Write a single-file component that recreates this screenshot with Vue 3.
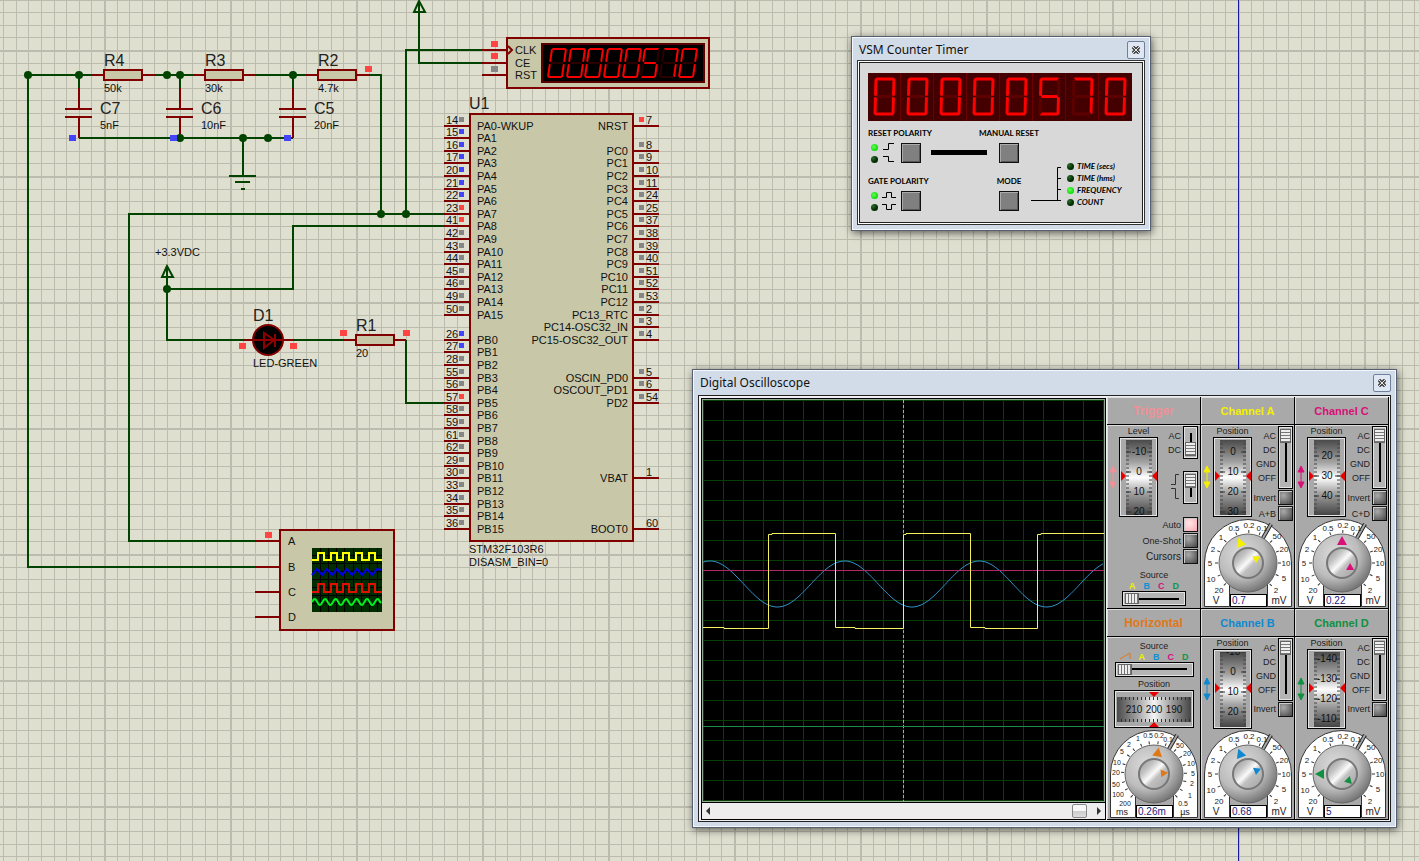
<template>
  <div class="workspace">
    <svg class="sheet" width="100%" height="100%">
      <defs>
        <pattern id="grid" x="104" y="50" width="126" height="126" patternUnits="userSpaceOnUse">
          <rect width="126" height="126" fill="#dfdfd0" />
          <g fill="#bcbcae">
            <rect v-for="n in 9" :key="'v' + n" :x="Math.round(n * 12.6)" y="0" width="1" height="126" />
            <rect v-for="n in 9" :key="'h' + n" x="0" :y="Math.round(n * 12.6)" width="126" height="1" />
            <rect width="2" height="126" />
            <rect width="126" height="2" />
          </g>
        </pattern>
      </defs>
      <rect width="100%" height="100%" fill="url(#grid)" />
      <rect class="sheet-edge" x="1238" y="0" width="1" height="100%" />

      <!-- wires -->
      <path
        class="wire"
        d="M28 75H91M155 75H193M255 75H306M369 75H381V214M28 75V567H255M79 75V88M180 75V88M293 75V88M79 138H293M243 138V176
           M444 214H129V541H255M444 226H293V289H167M167 266V340H243M293 340H343M406 340V403H444M406 214V50H482M419 2V63H482"
      />
      <path class="wire" d="M229 176H256M235 182H250M241 189H245" />
      <path class="wire" fill="none" d="M167 266L162 277H173ZM419 1L414 12H425Z" />

      <!-- component leads -->
      <path
        class="lead"
        d="M91 75H155M193 75H255M306 75H369M343 340H406M243 340H293M482 50H507M482 63H507M482 75H507
           M255 541H280M255 567H280M255 592H280M255 617H280"
      />
      <g v-for="x in [79, 180, 293]" :key="x">
        <path class="lead" :d="`M${x} 88V109M${x} 117V138M${x - 14} 109H${x + 13}M${x - 14} 117H${x + 13}`" />
      </g>
      <rect v-for="r in resistors" :key="r.x" class="body" :x="r.x" :y="r.y" width="38" height="10" />
      <circle v-for="(n, i) in nodes" :key="i" class="node" :cx="n[0]" :cy="n[1]" r="4" />

      <!-- led -->
      <circle class="led" cx="268" cy="340" r="15" />
      <path class="led-mark" d="M253 340H283M264 333V348L274 340ZM275 334V347" />

      <rect v-for="(p, i) in probes" :key="i" :x="p[0] - 3" :y="p[1] - 3" width="7" height="6" :fill="levels[p[2]]" />

      <!-- counter part -->
      <rect class="body" x="507" y="38" width="202" height="50" />
      <path class="lead" fill="none" d="M508 46L512 50L508 54" />
      <rect x="542" y="44" width="162" height="38" fill="#000" stroke="#5a0000" stroke-width="2" />
      <g v-for="(c, i) in digits" :key="i" :transform="`translate(${548 + i * 19 - Math.round(i / 3)} 49)`">
        <path
          v-for="(d, s) in smallSegs"
          :key="s"
          class="segment"
          :d="d"
          stroke-width="2"
          :stroke="lit[c].includes(s) ? '#f80000' : '#2c0000'"
        />
      </g>

      <!-- microcontroller -->
      <rect class="body" x="470" y="114" width="163" height="427" />
      <g v-for="p in leftPins" :key="p.num">
        <path class="lead" :d="`M444 ${p.y}H469`" />
        <text class="small" x="446" :y="p.y - 2">{{ p.num }}</text>
        <rect x="459" :y="p.y - 9" width="5" height="5" :fill="levels[p.level]" />
        <text class="small" x="477" :y="p.y + 4">{{ p.name }}</text>
      </g>
      <g v-for="p in rightPins" :key="p.num">
        <path class="lead" :d="`M634 ${p.y}H659`" />
        <text class="small" x="646" :y="p.y - 2">{{ p.num }}</text>
        <rect v-if="p.level" x="639" :y="p.y - 9" width="5" height="5" :fill="levels[p.level]" />
        <text class="small" x="628" :y="p.y + 4" text-anchor="end">{{ p.name }}</text>
      </g>

      <!-- oscilloscope part -->
      <rect class="body" x="280" y="530" width="114" height="100" />
      <rect x="312" y="548" width="70" height="64" fill="#002c00" />
      <path
        stroke="#000"
        d="M312 555.5H382M312 563.5H382M312 571.5H382M312 579.5H382M312 587.5H382M312 595.5H382M312 603.5H382
           M320.5 548V612M328.5 548V612M336.5 548V612M344.5 548V612M353.5 548V612M361.5 548V612M369.5 548V612M377.5 548V612"
      />
      <path class="mini" stroke="#ffff00" :d="miniSquare(560, 553)" />
      <path class="mini" stroke="#0000e8" :d="miniZigzag" />
      <path class="mini" stroke="#e01000" :d="miniSquare(592, 584)" />
      <path class="mini" stroke="#00f020" :d="miniSine" />

      <text v-for="(t, i) in bigLabels" :key="i" class="big" :x="t[0]" :y="t[1]">{{ t[2] }}</text>
      <text v-for="(t, i) in smallLabels" :key="i" class="small" :x="t[0]" :y="t[1]">{{ t[2] }}</text>
    </svg>

    <!-- counter timer window -->
    <section class="window counter">
      <header class="titlebar">
        <h2>VSM Counter Timer</h2>
        <button class="close" aria-label="Close">
          <svg width="8" height="8" viewBox="0 0 9 9"><path d="M1 1L8 8M8 1L1 8" stroke="#444" stroke-width="4" /><path d="M1 1L8 8M8 1L1 8" stroke="#fff" /></svg>
        </button>
      </header>
      <div class="counter-panel">
        <svg class="readout" width="264" height="48" role="img" aria-label="00000570">
          <rect width="264" height="48" fill="#440000" />
          <g v-for="(c, i) in digits" :key="i" :transform="`translate(${i * 33} 0)`">
            <rect v-if="i" x="-1" width="1" height="48" fill="#6a0000" />
            <g transform="translate(7 6)">
              <path
                v-for="(d, s) in largeSegs"
                :key="s"
                class="segment"
                :d="d"
                stroke-width="3"
                :stroke="lit[c].includes(s) ? '#ff0000' : '#5c0000'"
              />
            </g>
          </g>
        </svg>
        <div class="controls">
          <div class="polarity">
            <label for="reset-polarity">RESET POLARITY</label>
            <div class="polarity-row">
              <div class="leds"><i class="lamp on"></i><i class="lamp"></i></div>
              <svg width="14" height="20"><path class="edge" d="M1 6.5H6.5V0.5H12M1 13.5H6.5V18.5H12" /></svg>
              <button id="reset-polarity" class="key"></button>
            </div>
          </div>
          <div class="bar"></div>
          <div class="single">
            <label for="manual-reset">MANUAL RESET</label>
            <button id="manual-reset" class="key"></button>
          </div>
          <div class="polarity">
            <label for="gate-polarity">GATE POLARITY</label>
            <div class="polarity-row">
              <div class="leds"><i class="lamp on"></i><i class="lamp"></i></div>
              <svg width="14" height="20"><path class="edge" d="M0 6.5H4.5V1.5H9.5V6.5H14M0 13.5H4.5V18.5H9.5V13.5H14" /></svg>
              <button id="gate-polarity" class="key"></button>
            </div>
          </div>
          <div></div>
          <div class="single">
            <label for="mode">MODE</label>
            <button id="mode" class="key"></button>
          </div>
          <div class="modes">
            <svg width="30" height="48"><path class="edge" d="M0 40.5H30M30 7.5H26.5V41M26 18.5H30M26 29.5H30" /></svg>
            <ul>
              <li v-for="m in modes" :key="m"><i class="lamp" :class="{ on: m === 'FREQUENCY' }"></i>{{ m }}</li>
            </ul>
          </div>
        </div>
      </div>
    </section>

    <!-- oscilloscope window -->
    <section class="window scope">
      <header class="titlebar">
        <h2>Digital Oscilloscope</h2>
        <button class="close" aria-label="Close">
          <svg width="8" height="8" viewBox="0 0 9 9"><path d="M1 1L8 8M8 1L1 8" stroke="#444" stroke-width="4" /><path d="M1 1L8 8M8 1L1 8" stroke="#fff" /></svg>
        </button>
      </header>
      <div class="scope-body">
        <div class="display">
          <svg class="screen" width="401" height="401">
            <rect width="401" height="401" fill="#000" />
            <g stroke="#073f07">
              <path v-for="n in 19" :key="n" :d="`M${n * 20 + 0.5} 0V401M0 ${n * 20 + 0.5}H401`" />
              <path fill="none" d="M0.5 0.5H400.5V400.5H0.5Z" />
            </g>
            <path stroke="#a0b0a0" stroke-dasharray="3 2" d="M200.5 0V401" />
            <path stroke="#1d8a4a" d="M0 326.5H401" />
            <path fill="none" stroke="#3090c8" :d="sineTrace" />
            <path stroke="#b02868" d="M0 170.5H401" />
            <path fill="none" stroke="#f4f060" d="M0 227.5H21V228.5H65.5V134.5H69V133.5H132.5V227.5H152V228.5H200.5V134.5H203V133.5H267.5V227.5H282V228.5H334.5V134.5H338V133.5H401" />
          </svg>
          <div class="scroller">
            <button aria-label="Scroll left"><svg width="6" height="8"><path d="M5 0V8L1 4Z" fill="#333" /></svg></button>
            <input type="range" aria-label="Time position" min="0" max="100" value="100" />
            <button aria-label="Scroll right"><svg width="6" height="8"><path d="M1 0V8L5 4Z" fill="#333" /></svg></button>
          </div>
        </div>

        <div class="panels">
          <article v-for="p in panels" :key="p.title" class="panel">
            <h3 :class="{ wide: p.kind !== 'channel' }" :style="{ color: p.color }">{{ p.title }}</h3>

            <div v-if="p.kind !== 'horizontal'" class="top-row" :class="p.kind">
              <div class="wheel-col">
                <span>{{ p.kind === 'trigger' ? 'Level' : 'Position' }}</span>
                <div class="wheel-row">
                  <svg width="8" height="24"><path :fill="p.color" :stroke="p.color" d="M4 2V22M4 1L1 7H7ZM4 23L1 17H7Z" /></svg>
                  <svg class="wheel" width="39" height="80">
                    <rect x="6" y="2" width="26" height="75" fill="url(#drum-v)" />
                    <path v-for="n in 18" :key="n" stroke="#444" :d="`M6 ${tickY(p, n)}H9M29 ${tickY(p, n)}H32`" />
                    <svg x="6" y="2" width="26" height="75">
                      <g v-for="s in p.scale" :key="s.text">
                        <path stroke="#333" :d="`M0 ${s.y - 3}H5M21 ${s.y - 3}H26`" />
                        <text class="drum-text" x="13" :y="s.y">{{ s.text }}</text>
                      </g>
                    </svg>
                    <path fill="#e80000" d="M1 33V43L6 38ZM37 33V43L32 38Z" />
                  </svg>
                </div>
              </div>
              <div v-if="p.kind === 'channel'" class="switch-col">
                <div class="switch">
                  <ul><li>AC</li><li>DC</li><li>GND</li><li>OFF</li></ul>
                  <input class="slide-v" type="range" :aria-label="p.title + ' coupling'" min="0" max="3" value="0" />
                </div>
                <label class="check">Invert<input type="checkbox" /></label>
                <label v-if="p.sum" class="check">{{ p.sum }}<input type="checkbox" /></label>
              </div>
              <div v-else class="switch-col">
                <div class="switch">
                  <ul><li>AC</li><li>DC</li></ul>
                  <input class="slide-v short" type="range" aria-label="Trigger coupling" min="0" max="1" value="1" />
                </div>
                <div class="switch slope">
                  <svg width="9" height="30"><path fill="none" stroke="#333" d="M0 13.5H4.5V3.5H8M0 17.5H4.5V27.5H8" /></svg>
                  <input class="slide-v short" type="range" aria-label="Trigger slope" min="0" max="1" value="0" />
                </div>
              </div>
            </div>

            <template v-if="p.kind === 'trigger'">
              <div class="trigger-checks">
                <label class="check">Auto<input type="checkbox" checked /></label>
                <label class="check">One-Shot<input type="checkbox" /></label>
                <label class="check larger">Cursors<input type="checkbox" /></label>
              </div>
              <div class="source">
                <span>Source</span>
                <div class="letters"><b v-for="l in letters" :key="l[0]" :style="{ color: l[1] }">{{ l[0] }}</b></div>
                <input class="slide-h" type="range" aria-label="Trigger source" min="0" max="3" value="0" />
              </div>
            </template>

            <div v-if="p.kind === 'horizontal'" class="source horizontal">
              <span>Source</span>
              <div class="letters">
                <svg width="11" height="8"><path fill="none" stroke="#e07818" d="M0 7L10 1V7" /></svg>
                <b v-for="l in letters" :key="l[0]" :style="{ color: l[1] }">{{ l[0] }}</b>
              </div>
              <input class="slide-h" type="range" aria-label="Horizontal source" min="0" max="4" value="0" />
              <span class="gap">Position</span>
              <svg class="wheel" width="80" height="38">
                <rect x="2" y="6" width="74" height="25" fill="url(#drum-h)" />
                <path v-for="n in 18" :key="n" stroke="#333" :d="`M${n * 4 + 2.5} 6V9M${n * 4 + 2.5} 28V31`" />
                <text class="drum-text" x="19" y="22">210</text>
                <text class="drum-text" x="39" y="22">200</text>
                <text class="drum-text" x="59" y="22">190</text>
                <path fill="#e80000" d="M34 1H44L39 6ZM34 36H44L39 31Z" />
              </svg>
            </div>

            <div v-if="p.knob" class="knob" :class="{ dense: p.kind === 'horizontal' }">
              <svg width="88" height="88">
                <path d="M0.5 87.5V44A43.5 43.5 0 0 1 87.5 44V87.5H63.5V60H25.5V87.5Z" fill="#fff" stroke="#333" />
                <path d="M59 19L67 5" stroke="#222" stroke-width="4" />
                <path d="M59 19L67 5" stroke="#a6a6a6" stroke-width="2" />
                <path v-for="(t, i) in p.knob.marks" :key="i" stroke="#333" d="M44 14V11" :transform="`rotate(${markAngle(t)} 44 44)`" />
                <text v-for="(t, i) in p.knob.marks" :key="'t' + i" class="mark" :x="t[0]" :y="t[1] + 3">{{ t[2] }}</text>
                <text class="unit" x="12" y="85">{{ p.knob.units[0] }}</text>
                <text class="unit" x="75" y="85">{{ p.knob.units[1] }}</text>
                <circle cx="44" cy="44" r="29" fill="url(#knob-outer)" stroke="#666" />
                <circle cx="44" cy="44" r="15" fill="url(#knob-inner)" stroke="#777" stroke-width="2" />
                <path :fill="p.color" d="M44 17L49 26H39Z" :transform="`rotate(${p.knob.outer} 44 44)`" />
                <path :fill="p.color" d="M44 30L48 37H40Z" :transform="`rotate(${p.knob.inner} 44 44)`" />
              </svg>
              <input type="text" :aria-label="p.title + ' scale'" :value="p.knob.value" />
            </div>
          </article>
        </div>
      </div>
    </section>

    <svg class="defs" width="0" height="0">
      <defs>
        <linearGradient id="drum-v" x1="0" y1="0" x2="0" y2="1">
          <stop offset="0" stop-color="#4a4a4a" /><stop offset="0.3" stop-color="#a4a4a4" /><stop offset="0.5" stop-color="#fff" />
          <stop offset="0.7" stop-color="#a4a4a4" /><stop offset="1" stop-color="#444" />
        </linearGradient>
        <linearGradient id="drum-h" x1="0" y1="0" x2="1" y2="0">
          <stop offset="0" stop-color="#4a4a4a" /><stop offset="0.25" stop-color="#999" /><stop offset="0.5" stop-color="#f4f4f4" />
          <stop offset="0.75" stop-color="#999" /><stop offset="1" stop-color="#444" />
        </linearGradient>
        <radialGradient id="knob-outer" cx="0.38" cy="0.35" r="0.68">
          <stop offset="0" stop-color="#dcdcdc" /><stop offset="0.6" stop-color="#bcbcbc" /><stop offset="1" stop-color="#747474" />
        </radialGradient>
        <linearGradient id="knob-inner" x1="0" y1="0" x2="1" y2="1">
          <stop offset="0.1" stop-color="#a0a0a0" /><stop offset="0.3" stop-color="#c4c4c4" /><stop offset="0.48" stop-color="#fafafa" />
          <stop offset="0.6" stop-color="#c0c0c0" /><stop offset="0.9" stop-color="#a8a8a8" />
        </linearGradient>
      </defs>
    </svg>
  </div>
</template>

<script setup>
const levels = { r: '#ff4444', b: '#4444f8', g: '#868686' }

const resistors = [
  { x: 104, y: 70 },
  { x: 205, y: 70 },
  { x: 318, y: 70 },
  { x: 356, y: 335 }
]

const nodes = [
  [28, 75], [79, 75], [167, 75], [180, 75], [293, 75],
  [180, 138], [243, 138], [268, 138],
  [381, 214], [406, 214], [167, 289]
]

const probes = [
  [368, 69, 'r'], [72, 138, 'b'], [173, 138, 'b'], [287, 138, 'b'],
  [242, 346, 'r'], [293, 346, 'r'], [343, 333, 'r'], [406, 333, 'r'],
  [494, 44, 'r'], [494, 56, 'r'], [494, 69, 'g'], [268, 535, 'r']
]

const bigLabels = [
  [104, 66, 'R4'], [205, 66, 'R3'], [318, 66, 'R2'],
  [100, 114, 'C7'], [201, 114, 'C6'], [314, 114, 'C5'],
  [253, 321, 'D1'], [356, 331, 'R1'], [469, 109, 'U1']
]

const smallLabels = [
  [104, 92, '50k'], [205, 92, '30k'], [318, 92, '4.7k'],
  [100, 129, '5nF'], [201, 129, '10nF'], [314, 129, '20nF'],
  [155, 256, '+3.3VDC'], [253, 367, 'LED-GREEN'], [356, 357, '20'],
  [469, 553, 'STM32F103R6'], [469, 566, 'DISASM_BIN=0'],
  [515, 54, 'CLK'], [515, 67, 'CE'], [515, 79, 'RST'],
  [288, 545, 'A'], [288, 571, 'B'], [288, 596, 'C'], [288, 621, 'D']
]

// pins sit on the 12.6px grid, counted from the first row
const pinY = (row) => Math.round(125.6 + row * 12.6)

const portA = [14, 15, 16, 17, 20, 21, 22, 23, 41, 42, 43, 44, 45, 46, 49, 50]
const portB = [26, 27, 28, 55, 56, 57, 58, 59, 61, 62, 29, 30, 33, 34, 35, 36]
const blue = [15, 16, 17, 20, 21, 22, 26, 27]
const red = [23, 41, 57]
const pinLevel = (num) => (blue.includes(num) ? 'b' : red.includes(num) ? 'r' : 'g')

const leftPins = [
  ...portA.map((num, i) => ({ num, name: i ? `PA${i}` : 'PA0-WKUP', y: pinY(i), level: pinLevel(num) })),
  ...portB.map((num, i) => ({ num, name: `PB${i}`, y: pinY(i + 17), level: pinLevel(num) }))
]

const rightPins = [
  [0, 7, 'NRST', 'r'],
  ...[8, 9, 10, 11, 24, 25, 37, 38, 39, 40, 51, 52, 53].map((num, i) => [i + 2, num, `PC${i}`, 'g']),
  [15, 2, 'PC13_RTC', 'g'],
  [16, 3, 'PC14-OSC32_IN', 'g'],
  [17, 4, 'PC15-OSC32_OUT', 'g'],
  [20, 5, 'OSCIN_PD0', 'g'],
  [21, 6, 'OSCOUT_PD1', 'g'],
  [22, 54, 'PD2', 'g'],
  [28, 1, 'VBAT', ''],
  [32, 60, 'BOOT0', '']
].map(([row, num, name, level]) => ({ y: pinY(row), num, name, level }))

// seven segment displays
const digits = '00000570'.split('')
const lit = { 0: 'abcdef', 5: 'acdfg', 7: 'abc' }

const segments = (w, h, slant) => {
  const m = h / 2
  const at = (x, y) => `${x + slant * (1 - y / h)} ${y}`
  return {
    g: `M${at(2, m)}L${at(w - 2, m)}`,
    a: `M${at(1, 0)}L${at(w - 1, 0)}`,
    b: `M${at(w, 1)}L${at(w, m - 2)}`,
    c: `M${at(w, m + 2)}L${at(w, h - 1)}`,
    d: `M${at(1, h)}L${at(w - 1, h)}`,
    e: `M${at(0, m + 2)}L${at(0, h - 1)}`,
    f: `M${at(0, 1)}L${at(0, m - 2)}`
  }
}
const smallSegs = segments(14, 28, 4)
const largeSegs = segments(18, 35, 1)

const miniSquare = (low, high) => {
  let d = `M312 ${low}`
  for (let i = 0; i < 5; i++) {
    const x = 318 + Math.round(i * 12.7)
    d += `H${x}V${high}H${x + 6}V${low}`
  }
  return d + 'H382'
}
const miniZigzag = 'M312 575' + Array.from({ length: 13 }, (_, i) => `L${317 + i * 5} ${i % 2 ? 575 : 569}`).join('') + 'L382 570'
const miniSine = 'M312 602' + Array.from({ length: 70 }, (_, i) => `L${312 + i} ${602 - 3 * Math.sin(i / 1.67)}`).join('')

const sineTrace = 'M' + Array.from({ length: 201 }, (_, i) => {
  const x = i * 2
  return `${x} ${(184 - 23 * Math.cos(((x - 7) * Math.PI * 2) / 134.6)).toFixed(1)}`
}).join('L')

const modes = ['TIME (secs)', 'TIME (hms)', 'FREQUENCY', 'COUNT']
const letters = [['A', '#f0f000'], ['B', '#1090d8'], ['C', '#d81080'], ['D', '#109848']]

const channelMarks = [
  [15, 71, '20'], [7, 60, '10'], [6, 44, '5'], [9, 30, '2'], [17, 18, '1'], [30, 9, '0.5'], [45, 6, '0.2'], [58, 9, '0.1'],
  [73, 17, '50'], [80, 30, '20'], [82, 44, '10'], [80, 59, '5'], [72, 71, '2']
]
const timeMarks = [
  [15, 73, '200'], [8, 64, '100'], [6, 54, '50'], [6, 42, '20'], [7, 32, '10'], [12, 21, '5'], [19, 14, '2'], [28, 8, '1'],
  [38, 5, '0.5'], [49, 5, '0.2'], [58, 9, '0.1'],
  [70, 15, '50'], [77, 23, '20'], [81, 33, '10'], [83, 43, '5'], [82, 53, '2'], [80, 65, '1'], [73, 73, '0.5']
]
const markAngle = ([x, y]) => (Math.atan2(x - 44, 44 - y) * 180) / Math.PI

const drum = (first, step, start, count = 4) =>
  Array.from({ length: count }, (_, i) => ({ text: String(first + i * step), y: start + i * 20 }))
const tickY = (p, n) => ((p.scale[0].y + 3) % 4) + n * 4

const channel = (title, color, scale, knob, sum) => ({
  kind: 'channel', title, color, scale, sum,
  knob: { marks: channelMarks, units: ['V', 'mV'], ...knob }
})

const panels = [
  { kind: 'trigger', title: 'Trigger', color: '#f09098', scale: drum(-10, 10, 15) },
  channel('Channel A', '#f4f000', drum(0, 10, 15), { outer: -21, inner: 62, value: '0.7' }, 'A+B'),
  channel('Channel C', '#d81078', drum(20, 10, 19, 3), { outer: 0, inner: 120, value: '0.22' }, 'C+D'),
  {
    kind: 'horizontal', title: 'Horizontal', color: '#e07818',
    knob: { marks: timeMarks, units: ['ms', 'µs'], outer: 10, inner: 85, value: '0.26m' }
  },
  channel('Channel B', '#1088d0', drum(-10, 10, 3), { outer: -21, inner: 68, value: '0.68' }),
  channel('Channel D', '#109040', drum(-140, 10, 10), { outer: -90, inner: 135, value: '5' })
]
</script>

<style>
body {
  margin: 0;
}
</style>

<style scoped>
.workspace {
  position: relative;
  min-height: 100vh;
  overflow: hidden;
  font-family: 'Liberation Sans', Arial, sans-serif;
  color: #222;
}

.sheet {
  position: absolute;
  inset: 0;
}

.sheet-edge {
  fill: #1818a0;
}

.wire {
  fill: none;
  stroke: #004400;
  stroke-width: 2;
}

.lead {
  fill: none;
  stroke: #800000;
  stroke-width: 2;
}

.body {
  fill: #c8c8a9;
  stroke: #800000;
  stroke-width: 2;
}

.node {
  fill: #004400;
}

.led {
  fill: #000;
  stroke: #800000;
  stroke-width: 2;
}

.led-mark {
  fill: none;
  stroke: #900000;
  stroke-width: 2;
}

.segment {
  fill: none;
  stroke-linecap: round;
}

.mini {
  fill: none;
  stroke-width: 2;
}

.big {
  font-size: 16px;
  fill: #222;
}

.small {
  font-size: 11px;
  fill: #111;
}

.defs {
  position: absolute;
}

h2,
h3,
ul {
  margin: 0;
  padding: 0;
  list-style: none;
}

/* windows */
.window {
  position: absolute;
  box-sizing: border-box;
  width: max-content;
  padding: 0 5px 5px;
  border: 1px solid #566070;
  background: #d1dce8;
  box-shadow: inset 0 0 0 1px #f4f8fc, 1px 2px 8px rgba(0, 0, 0, 0.6);
}

.counter {
  left: 851px;
  top: 36px;
}

.scope {
  left: 692px;
  top: 369px;
}

.titlebar {
  display: flex;
  align-items: center;
  justify-content: space-between;
  height: 25px;
  padding-left: 2px;
}

.titlebar h2 {
  font: 400 12px 'Noto Sans', sans-serif;
  color: #111;
}

.close {
  display: flex;
  align-items: center;
  justify-content: center;
  width: 18px;
  height: 18px;
  padding: 0;
  border: 1px solid #70809a;
  border-radius: 2px;
  background: #dfe8f2;
}

/* counter */
.counter-panel {
  padding: 10px 10px 11px 8px;
  border: 1px solid #222;
  outline: 1px solid #fff;
  box-shadow: 0 0 0 2px #333;
  margin: 0 2px 2px;
  background: #d8d8d8;
}

.readout {
  display: block;
}

.controls {
  display: grid;
  grid-template-columns: 63px 56px 44px 1fr;
  row-gap: 13px;
  margin-top: 7px;
  font: 700 8px/10px Lato, sans-serif;
  color: #000;
}

.controls label {
  display: block;
  height: 10px;
  margin-bottom: 5px;
  white-space: nowrap;
}

.polarity-row {
  display: flex;
  align-items: center;
}

.leds {
  display: flex;
  flex-direction: column;
  gap: 5px;
  margin: 0 4px 0 3px;
}

.polarity-row svg {
  flex: none;
  margin-right: 5px;
}

.lamp {
  width: 7px;
  height: 7px;
  border-radius: 50%;
  background: radial-gradient(circle at 30% 30%, #2a6a2a, #002c00 60%);
}

.lamp.on {
  background: radial-gradient(circle at 40% 40%, #60ff50, #18e010 60%, #20a018);
}

.edge {
  fill: none;
  stroke: #000;
}

.key {
  width: 20px;
  height: 20px;
  padding: 0;
  border: 1px solid #111;
  background: #808080;
  box-shadow: inset 1px 1px 0 #aaa, inset -1px -1px 0 #555;
}

.bar {
  height: 5px;
  margin-top: 22px;
  background: #000;
}

.single {
  display: flex;
  flex-direction: column;
  align-items: center;
}

.modes {
  display: flex;
  grid-column: 4;
  grid-row: 1 / 3;
  align-self: end;
  margin-bottom: 3px;
}

.modes ul {
  padding-left: 6px;
  font-style: italic;
}

.modes li {
  display: flex;
  align-items: center;
  gap: 3px;
  height: 12px;
  white-space: nowrap;
}

/* oscilloscope */
.scope-body {
  display: flex;
  gap: 1px;
  padding: 1px 1px 1px 2px;
  border: 1px solid #222;
  background: #f0f0f4;
}

.display {
  display: flex;
  flex-direction: column;
  margin-top: 1px;
  border: 1px solid #000;
}

.screen {
  display: block;
  border: 1px solid #90a890;
}

.scroller {
  display: flex;
  flex: 1;
  align-items: center;
  padding: 0 3px;
  border-top: 1px solid #000;
  background: #ededed;
}

.scroller button {
  display: flex;
  padding: 0;
  border: 0;
  background: none;
}

.scroller input {
  flex: 1;
  min-width: 0;
  height: 16px;
  margin: 0 9px 0 6px;
  appearance: none;
  background: none;
}

.scroller input::-webkit-slider-thumb {
  appearance: none;
  box-sizing: border-box;
  width: 15px;
  height: 14px;
  border: 1px solid #888;
  border-radius: 2px;
  background: linear-gradient(#f8f8f8 50%, #ccc 50%, #ddd);
}

.panels {
  display: grid;
  grid-template-columns: repeat(3, 94px);
  grid-template-rows: 1fr 1fr;
  font-size: 9px;
}

.panel {
  display: flex;
  flex-direction: column;
  align-items: center;
  box-sizing: border-box;
  padding: 0 1px 1px 2px;
  border: solid #000;
  border-width: 0 1px 1px 0;
  background: #a9a9a9;
  box-shadow: inset 1px 1px 0 #ddd;
}

.panel h3 {
  box-sizing: border-box;
  align-self: stretch;
  height: 28px;
  margin: 0 -1px 0 -2px;
  border-bottom: 1px solid #000;
  box-shadow: 0 1px 0 #ddd;
  font-size: 11px;
  line-height: 29px;
  text-align: center;
}

.panel h3.wide {
  font-size: 12px;
}

.top-row {
  display: flex;
  align-self: stretch;
  justify-content: space-between;
  height: 92px;
}

.top-row.trigger {
  height: 91px;
  padding-right: 1px;
}

.wheel-col > span {
  display: block;
  height: 12px;
  padding-left: 10px;
  line-height: 12px;
  text-align: center;
}

.wheel-row {
  display: flex;
  align-items: center;
  gap: 2px;
}

.wheel {
  display: block;
  box-sizing: border-box;
  border: 1px solid #000;
  background: #a9a9a9;
  box-shadow: inset 0 0 0 1px #e4e4e4;
}

.drum-text {
  font-size: 10px;
  fill: #111;
  text-anchor: middle;
}

.switch-col {
  display: flex;
  flex-direction: column;
  align-items: flex-end;
  gap: 1px;
  padding-top: 1px;
}

.switch {
  display: flex;
  gap: 2px;
}

.switch ul {
  padding-top: 3px;
  text-align: right;
}

.switch li {
  height: 14px;
  line-height: 14px;
}

.slope {
  gap: 3px;
  margin-top: 11px;
}

.slide-v {
  box-sizing: border-box;
  width: 15px;
  height: 63px;
  margin: 0;
  padding: 2px 0;
  border: 1px solid #000;
  appearance: none;
  writing-mode: vertical-lr;
  background: linear-gradient(#000, #000) center / 2px calc(100% - 12px) no-repeat #b4b4b4;
  box-shadow: inset 0 0 0 1px #e4e4e4;
}

.slide-v.short {
  height: 33px;
}

.slide-v::-webkit-slider-thumb {
  appearance: none;
  box-sizing: border-box;
  width: 11px;
  height: 14px;
  border: 1px solid #666;
  background: repeating-linear-gradient(#eee 0 2px, #777 2px 3px);
}

.slide-h {
  box-sizing: border-box;
  width: 64px;
  height: 15px;
  margin: 0;
  padding: 0 2px;
  border: 1px solid #000;
  appearance: none;
  background: linear-gradient(#000, #000) center / calc(100% - 12px) 2px no-repeat #b4b4b4;
  box-shadow: inset 0 0 0 1px #e4e4e4;
}

.slide-h::-webkit-slider-thumb {
  appearance: none;
  box-sizing: border-box;
  width: 14px;
  height: 11px;
  border: 1px solid #666;
  background: repeating-linear-gradient(90deg, #eee 0 2px, #777 2px 3px);
}

.check {
  display: flex;
  align-items: center;
  justify-content: flex-end;
  gap: 2px;
  height: 15px;
  white-space: nowrap;
}

.check.larger {
  font-size: 10px;
}

.check input {
  box-sizing: border-box;
  width: 15px;
  height: 15px;
  margin: 0;
  border: 1px solid #111;
  appearance: none;
  background: radial-gradient(circle at 35% 35%, #aaa, #444);
  box-shadow: inset 1px 1px 0 #ccc;
}

.check input:checked {
  background: radial-gradient(circle at 40% 40%, #ffe8e8, #f8a8b0);
}

.trigger-checks {
  display: flex;
  flex-direction: column;
  align-self: flex-end;
  gap: 1px;
  padding: 1px 1px 0 0;
}

.source {
  display: flex;
  flex-direction: column;
  align-items: center;
  margin-top: 6px;
  line-height: 11px;
}

.letters {
  display: flex;
  justify-content: center;
  gap: 8px;
  height: 10px;
}

.source.horizontal {
  margin-top: 4px;
}

.source.horizontal .slide-h {
  width: 79px;
}

.source .gap {
  margin-top: 2px;
}

.knob {
  position: relative;
  display: flex;
  margin-top: auto;
}

.knob input {
  position: absolute;
  left: 26px;
  bottom: 0;
  box-sizing: border-box;
  width: 37px;
  height: 13px;
  padding: 0 1px;
  border: 1px solid #000;
  background: #fff;
  font: 10px 'Liberation Sans', Arial, sans-serif;
  color: #202080;
}

.mark {
  font-size: 8px;
  fill: #222;
  text-anchor: middle;
}

.dense .mark {
  font-size: 7px;
}

.unit {
  font-size: 10px;
  fill: #222;
  text-anchor: middle;
}

.dense .unit {
  font-size: 9px;
}
</style>
